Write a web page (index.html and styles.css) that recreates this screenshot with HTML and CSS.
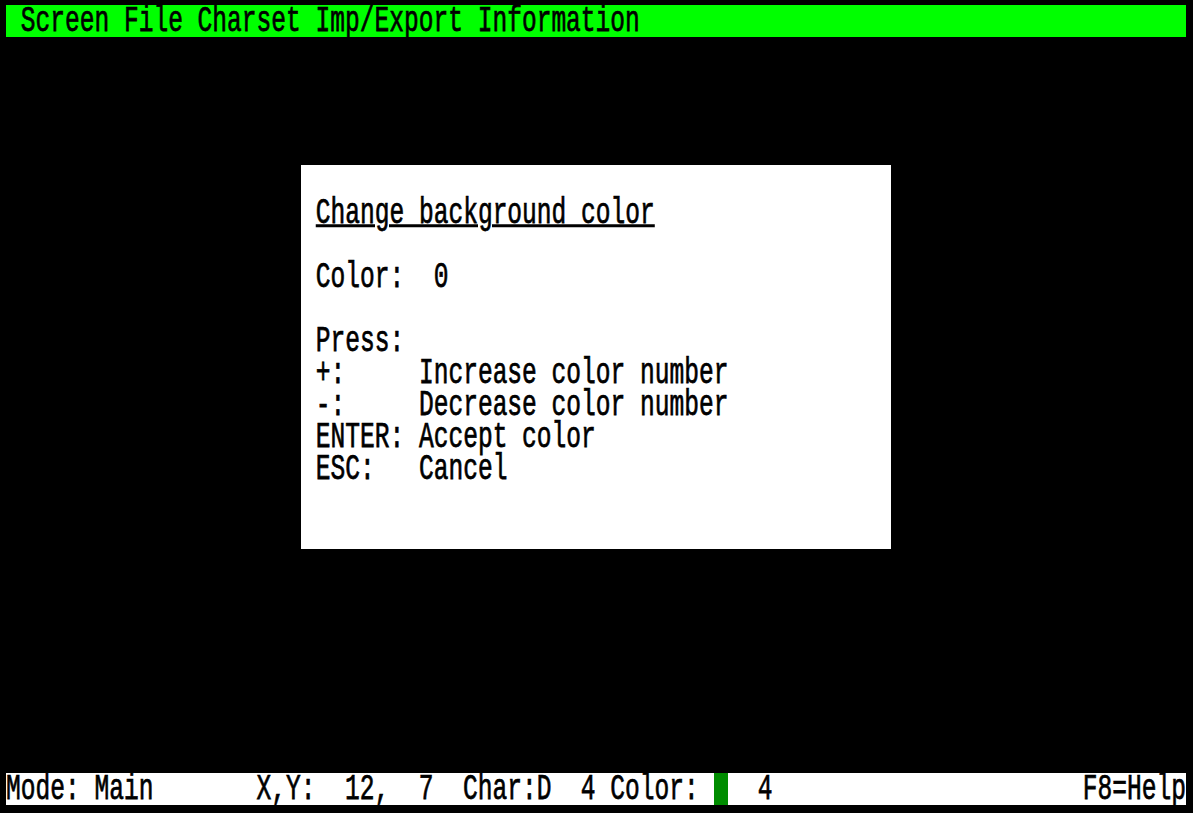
FILE: index.html
```html
<!DOCTYPE html>
<html>
<head>
<meta charset="utf-8">
<link rel="stylesheet" href="styles.css">
</head>
<body>
<div class="screen">
  <div class="row menubar"><span class="t"> Screen File Charset Imp/Export Information</span></div>
  <div class="desk">
    <div class="dialog">
      <div class="row"></div>
      <div class="row"><span class="t u">Change background color</span></div>
      <div class="row"></div>
      <div class="row"><span class="t">Color:  0</span></div>
      <div class="row"></div>
      <div class="row"><span class="t">Press:</span></div>
      <div class="row"><span class="t">+:     Increase color number</span></div>
      <div class="row"><span class="t">-:     Decrease color number</span></div>
      <div class="row"><span class="t">ENTER: Accept color</span></div>
      <div class="row"><span class="t">ESC:   Cancel</span></div>
    </div>
  </div>
  <div class="row statusbar">
    <span class="t">Mode: Main       X,Y:  12,  7  Char:D  4 Color: </span><span class="swatch"></span><span class="t">  4</span>
    <span class="t help">F8=Help</span>
  </div>
</div>
</body>
</html>
```

FILE: styles.css
```css
html, body {
  margin: 0;
  padding: 0;
  background: #000;
}

body {
  width: 1193px;
  height: 813px;
  overflow: hidden;
}

.screen {
  margin: 5px 0 0 6px;
  width: 1180px;
  height: 800px;
  display: flex;
  flex-direction: column;
  font-family: "Liberation Mono", monospace;
  font-size: 24.579px;
  color: #000;
}

.row {
  height: 32px;
  line-height: 32px;
  white-space: pre;
  display: flex;
  align-items: flex-start;
}

.t {
  display: inline-block;
  height: 32px;
  transform: translateY(4px) scaleY(1.5);
  transform-origin: 0 22.5px;
  -webkit-text-stroke: 0.5px #000;
}

.u {
  text-decoration: underline;
  text-decoration-thickness: 2px;
  text-underline-offset: 0.5px;
}

.menubar {
  background: #00ff00;
}

.desk {
  height: 736px;
  padding: 128px 0 0 295px;
  box-sizing: border-box;
}

.dialog {
  width: 590px;
  height: 384px;
  background: #fff;
  padding-left: 14.75px;
  box-sizing: border-box;
}

.statusbar {
  background: #fff;
}

.swatch {
  width: 14.75px;
  height: 32px;
  background: #008c00;
  flex: none;
}

.help {
  margin-left: auto;
}
```
